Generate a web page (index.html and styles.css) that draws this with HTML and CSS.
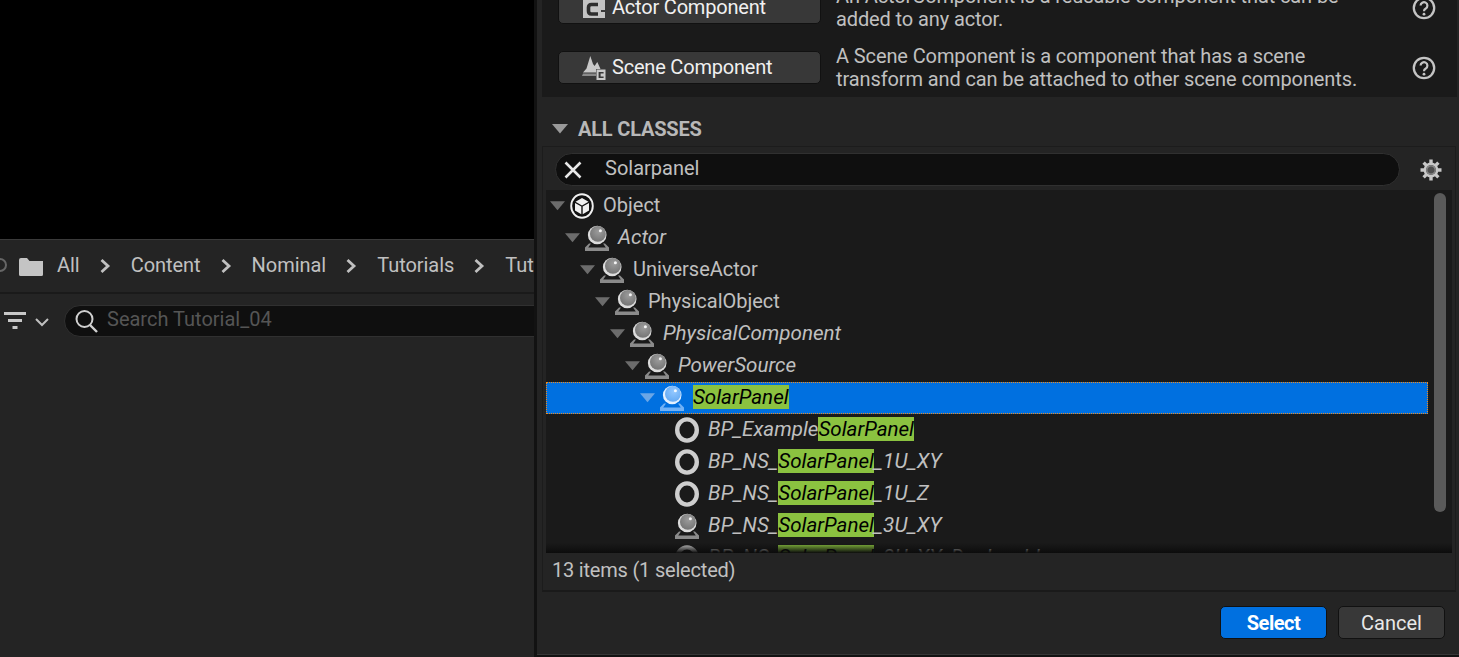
FILE: index.html
```html
<!DOCTYPE html>
<html lang="en">
<head>
<meta charset="utf-8">
<title>Pick Parent Class</title>
<link rel="stylesheet" href="styles.css">
</head>
<body>
<svg class="defs" width="0" height="0" aria-hidden="true">
  <defs>
    <radialGradient id="ball" cx="0.55" cy="0.35" r="0.7">
      <stop offset="0" stop-color="#9c9c9c"/><stop offset="1" stop-color="#727272"/>
    </radialGradient>
    <radialGradient id="ballsel" cx="0.55" cy="0.35" r="0.7">
      <stop offset="0" stop-color="#93c8ff"/><stop offset="1" stop-color="#62a8f2"/>
    </radialGradient>
    <symbol id="actor" viewBox="0 0 24 26" preserveAspectRatio="none">
      <path d="M0 26 V22.6 L4 18.5 H6 L3.2 22.6 H20.8 L18 18.5 H20 L24 22.6 V26 Z" fill="#8b8b8b"/>
      <circle cx="12.2" cy="10" r="9.3" fill="#dcdcdc"/>
      <circle cx="12.9" cy="8.9" r="7.9" fill="url(#ball)"/>
      <circle cx="15.4" cy="5.8" r="1.5" fill="#f4f4f4"/>
    </symbol>
    <symbol id="actorsel" viewBox="0 0 24 26" preserveAspectRatio="none">
      <path d="M0 26 V22.6 L4 18.5 H6 L3.2 22.6 H20.8 L18 18.5 H20 L24 22.6 V26 Z" fill="#72b2f6"/>
      <circle cx="12.2" cy="10" r="9.3" fill="#e4f1ff"/>
      <circle cx="12.9" cy="8.9" r="7.9" fill="url(#ballsel)"/>
      <circle cx="15.4" cy="5.8" r="1.5" fill="#f4faff"/>
    </symbol>
    <symbol id="ring" viewBox="0 0 24 26" preserveAspectRatio="none">
      <ellipse cx="12" cy="13" rx="9.8" ry="10.6" fill="none" stroke="#cecece" stroke-width="4.4"/>
    </symbol>
    <symbol id="tri" viewBox="0 0 16 10">
      <path d="M0 0 H16 L8 9.5 Z" fill="currentColor"/>
    </symbol>
    <symbol id="chev" viewBox="0 0 12 16">
      <path d="M2.5 2 L9 8 L2.5 14" fill="none" stroke="#c0c0c0" stroke-width="2.8"/>
    </symbol>
    <symbol id="help" viewBox="0 0 24 24">
      <circle cx="12" cy="12" r="10.2" fill="none" stroke="#c4c4c4" stroke-width="2.3"/>
      <path d="M8.6 9.6 A3.4 3.4 0 1 1 13.8 12.5 C12.5 13.2 12 13.8 12 15.2" fill="none" stroke="#c4c4c4" stroke-width="2.2"/>
      <circle cx="12" cy="18.2" r="1.4" fill="#c4c4c4"/>
    </symbol>
  </defs>
</svg>

<div class="app">
  <section class="left">
    <div class="viewport"></div>
    <div class="crumbs">
      <span class="history"></span>
      <svg class="folder" width="24" height="18" viewBox="0 0 24 18"><path d="M0 2 Q0 0 2 0 H8 L10.5 3 H24 V16.5 Q24 18 22.5 18 H1.5 Q0 18 0 16.5 Z" fill="#c4c4c4"/></svg>
      <span class="crumb crumb-first">All</span>
      <svg class="chev"><use href="#chev"/></svg>
      <span class="crumb">Content</span>
      <svg class="chev"><use href="#chev"/></svg>
      <span class="crumb">Nominal</span>
      <svg class="chev"><use href="#chev"/></svg>
      <span class="crumb">Tutorials</span>
      <svg class="chev"><use href="#chev"/></svg>
      <span class="crumb">Tutorial_04</span>
    </div>
    <div class="filterbar">
      <svg class="filter-icon" width="22" height="18" viewBox="0 0 22 18"><path d="M0 1.5 H22 M4 8.5 H18 M8.5 15.5 H13.5" stroke="#c8c8c8" stroke-width="3" fill="none"/></svg>
      <svg class="filter-caret" width="14" height="9" viewBox="0 0 14 9"><path d="M1 1 L7 7 L13 1" fill="none" stroke="#c0c0c0" stroke-width="2"/></svg>
      <div class="searchbox">
        <svg width="24" height="26" viewBox="0 0 24 26"><circle cx="10.5" cy="11" r="8" fill="none" stroke="#d0d0d0" stroke-width="2"/><path d="M16 17 L23 24" stroke="#d0d0d0" stroke-width="2.4"/></svg>
        <span class="placeholder">Search Tutorial_04</span>
      </div>
    </div>
  </section>

  <section class="dialog">
    <div class="common">
      <div class="common-row">
        <button class="comp-btn">
          <svg class="comp-icon" width="24" height="24" viewBox="0 0 24 24"><path d="M1 1 H23 V22 H1 Z" fill="#c4c4c4"/><path d="M16 8.5 H9.5 Q6.5 8.5 6.5 11.5 V15 Q6.5 18 9.5 18 H16" fill="none" stroke="#2e2e2e" stroke-width="3.6"/><path d="M19 14 H23 V16 H19 Z" fill="#3a3a3a"/></svg>
          Actor Component
        </button>
        <p class="comp-desc">An ActorComponent is a reusable component that can be<br>added to any actor.</p>
        <svg class="help"><use href="#help"/></svg>
      </div>
      <div class="common-row">
        <button class="comp-btn">
          <svg class="comp-icon" width="24" height="24" viewBox="0 0 24 24"><path d="M1 16.5 L4.5 12.5 L8.3 0 L11 8 L12.6 10 L15.3 6 L18.5 13 H14 V16.5 Z" fill="#c8c8c8"/><path d="M1 17.4 H14 V20 H0 Z" fill="#8a8a8a"/><path d="M14.5 13.5 H23.5 V24 H14.5 Z M16.6 16 V22 H21.6 V20.4 H18.6 V17.6 H21.6 V16 Z" fill="#cacaca" fill-rule="evenodd"/></svg>
          Scene Component
        </button>
        <p class="comp-desc">A Scene Component is a component that has a scene<br>transform and can be attached to other scene components.</p>
        <svg class="help"><use href="#help"/></svg>
      </div>
    </div>

    <h2 class="section-title"><svg class="section-tri"><use href="#tri"/></svg>ALL CLASSES</h2>

    <div class="picker">
      <div class="search-row">
        <div class="classsearch">
          <svg class="clear" width="18" height="18" viewBox="0 0 18 18"><path d="M1.5 1.5 L16.5 16.5 M16.5 1.5 L1.5 16.5" stroke="#e8e8e8" stroke-width="2.6"/></svg>
          <span class="query">Solarpanel</span>
        </div>
        <svg class="gear" width="22" height="22" viewBox="0 0 22 22">
          <g stroke="#c8c8c8" stroke-width="3.4">
            <path d="M11 0.5 V21.5 M0.5 11 H21.5 M3.6 3.6 L18.4 18.4 M18.4 3.6 L3.6 18.4"/>
          </g>
          <circle cx="11" cy="11" r="7.4" fill="#c8c8c8"/>
          <circle cx="11" cy="11" r="5" fill="#4e4e4e"/>
          <circle cx="11" cy="11" r="4.2" fill="none" stroke="#8a8a8a" stroke-width="1.2"/>
        </svg>
      </div>

      <div class="tree">
        <div class="rows">
          <div class="row lvl0">
            <svg class="tri"><use href="#tri"/></svg>
            <svg class="ico obj" viewBox="0 0 24 26" preserveAspectRatio="none"><ellipse cx="12" cy="13" rx="10.8" ry="11.8" fill="#111" stroke="#f0f0f0" stroke-width="1.9"/><path d="M12 5 L18.5 8.8 L12 12.4 L5.5 8.8 Z M5 10 L11.3 13.6 V21.2 L5 17.4 Z M19 10 L12.7 13.6 V21.2 L19 17.4 Z" fill="#f0f0f0"/></svg>
            <span class="label">Object</span>
          </div>
          <div class="row lvl1">
            <svg class="tri"><use href="#tri"/></svg>
            <svg class="ico"><use href="#actor"/></svg>
            <span class="label abstract">Actor</span>
          </div>
          <div class="row lvl2">
            <svg class="tri"><use href="#tri"/></svg>
            <svg class="ico"><use href="#actor"/></svg>
            <span class="label">UniverseActor</span>
          </div>
          <div class="row lvl3">
            <svg class="tri"><use href="#tri"/></svg>
            <svg class="ico"><use href="#actor"/></svg>
            <span class="label">PhysicalObject</span>
          </div>
          <div class="row lvl4">
            <svg class="tri"><use href="#tri"/></svg>
            <svg class="ico"><use href="#actor"/></svg>
            <span class="label abstract">PhysicalComponent</span>
          </div>
          <div class="row lvl5">
            <svg class="tri"><use href="#tri"/></svg>
            <svg class="ico"><use href="#actor"/></svg>
            <span class="label abstract">PowerSource</span>
          </div>
          <div class="row lvl6 selected">
            <svg class="tri"><use href="#tri"/></svg>
            <svg class="ico"><use href="#actorsel"/></svg>
            <span class="label abstract"><mark>SolarPanel</mark></span>
          </div>
          <div class="row lvl7">
            <svg class="ico"><use href="#ring"/></svg>
            <span class="label abstract">BP_Example<mark>SolarPanel</mark></span>
          </div>
          <div class="row lvl7">
            <svg class="ico"><use href="#ring"/></svg>
            <span class="label abstract wide">BP_NS_<mark>SolarPanel</mark>_1U_XY</span>
          </div>
          <div class="row lvl7">
            <svg class="ico"><use href="#ring"/></svg>
            <span class="label abstract wide">BP_NS_<mark>SolarPanel</mark>_1U_Z</span>
          </div>
          <div class="row lvl7">
            <svg class="ico"><use href="#actor"/></svg>
            <span class="label abstract wide">BP_NS_<mark>SolarPanel</mark>_3U_XY</span>
          </div>
          <div class="row lvl7">
            <svg class="ico"><use href="#ring"/></svg>
            <span class="label abstract wide">BP_NS_<mark>SolarPanel</mark>_3U_XY_Deployable</span>
          </div>
        </div>
        <div class="scroll-track"><div class="scroll-thumb"></div></div>
      </div>
      <div class="status">13 items (1 selected)</div>
    </div>

    <div class="footer">
      <button class="btn primary">Select</button>
      <button class="btn">Cancel</button>
    </div>
  </section>
</div>
</body>
</html>
```
FILE: styles.css
```css
* { box-sizing: border-box; }
html, body { margin: 0; height: 657px; overflow: hidden; background: #242424; }
body { font-family: Roboto, "Liberation Sans", sans-serif; font-size: 20px; color: #c0c0c0; }
.defs { display: block; height: 0; }
.app { display: flex; height: 657px; overflow: hidden; }

/* left: content browser */
.left { width: 534px; flex: none; display: flex; flex-direction: column; overflow: hidden; }
.viewport { height: 239px; background: #000; flex: none; }
.crumbs { flex: none; height: 55px; border-top: 1px solid #3a3a3a; border-bottom: 2px solid #1a1a1a; display: flex; align-items: center; white-space: nowrap; overflow: hidden; padding-bottom: 2px; }
.history { flex: none; width: 14px; height: 14px; border: 2px solid #666; border-radius: 50%; margin-left: -7px; margin-right: 12px; }
.folder { flex: none; margin-top: 3px; }
.crumb { color: #c0c0c0; letter-spacing: -0.04px; }
.crumb-first { margin-left: 14px; }
.chev { flex: none; width: 12px; height: 16px; margin: 2px 20px 0 19px; }
.filterbar { flex: none; display: flex; align-items: center; height: 54px; padding-left: 4px; }
.filter-icon { flex: none; }
.filter-caret { flex: none; margin-left: 9px; margin-top: 2px; }
.searchbox { flex: none; width: 560px; height: 32px; margin-left: 15px; background: #0f0f0f; border: 1px solid #303030; border-radius: 16px; display: flex; align-items: center; padding-left: 9px; gap: 9px; }
.placeholder { color: #555; margin-bottom: 4px; }

/* dialog */
.dialog { flex: 1; min-width: 0; border-left: 3px solid #121212; border-bottom: 2px solid #121212; box-shadow: inset 0 -1px #363636; display: flex; flex-direction: column; height: 657px; }
.common { flex: none; height: 97px; margin-left: 5px; margin-right: 2px; background: #1a1a1a; display: flex; flex-direction: column; justify-content: flex-end; gap: 27px; padding: 0 0 13px 16px; overflow: hidden; }
.common-row { flex: none; display: flex; align-items: center; height: 33px; }
.comp-btn { flex: none; width: 263px; height: 33px; padding: 0 0 2px 23px; display: flex; align-items: center; gap: 6px; background: #383838; border: 1px solid #111; border-radius: 5px; color: #f0f0f0; font: inherit; letter-spacing: -0.2px; }
.comp-icon { flex: none; margin-top: 2px; }
.comp-desc { margin: 0 0 0 15px; width: 560px; line-height: 23px; color: #c0c0c0; white-space: nowrap; letter-spacing: -0.11px; }
.help { flex: none; width: 24px; height: 24px; margin-left: 16px; }

.section-title { flex: none; margin: 0; height: 49px; font-size: 20px; font-weight: 700; color: #b8b8b8; display: flex; align-items: center; padding: 14px 0 0 15px; letter-spacing: -0.2px; }
.section-tri { width: 16px; height: 10px; color: #9a9a9a; margin-right: 10px; }

.picker { flex: none; height: 446px; margin-left: 5px; margin-right: 3px; border: 1px solid #1c1c1c; border-bottom: 2px solid #1a1a1a; display: flex; flex-direction: column; }
.search-row { flex: none; height: 43px; display: flex; align-items: flex-start; padding: 6px 0 0 12px; }
.classsearch { flex: none; width: 845px; height: 33px; background: #0f0f0f; border: 1px solid #303030; border-radius: 17px; display: flex; align-items: center; padding-left: 8px; }
.query { margin-left: 23px; margin-bottom: 4px; color: #c0c0c0; }
.clear { flex: none; }
.gear { flex: none; margin: 6px 0 0 20px; }

.tree { flex: none; height: 363px; margin-left: 3px; margin-right: 3px; background: #1a1a1a; display: flex; overflow: hidden; position: relative; }
.tree::after { content: ""; position: absolute; left: 0; right: 0; bottom: 0; height: 10px; background: linear-gradient(to bottom, rgba(10,10,10,0), #0c0c0c); }
.rows { flex: none; width: 882px; overflow: hidden; height: 363px; }
.row { height: 32px; display: flex; align-items: center; white-space: nowrap; }
.row.selected { background: #0070e0; outline: 1px dotted #f08a1c; outline-offset: -1px; }
.tri { flex: none; width: 15px; height: 10px; color: #6c6c6c; margin-right: 5px; }
.selected .tri { color: #6aa6e6; }
.ico { flex: none; width: 24px; height: 26px; }
.label { margin-left: 9px; margin-bottom: 2px; color: #c0c0c0; }
.abstract { font-style: italic; font-size: 20.6px; }
.wide { letter-spacing: 0.18px; }
.selected .label { color: #000; }
mark { background: #8bc240; color: #000; letter-spacing: 0; }
.lvl0 { padding-left: 4px; }
.lvl1 { padding-left: 19px; }
.lvl2 { padding-left: 34px; }
.lvl3 { padding-left: 49px; }
.lvl4 { padding-left: 64px; }
.lvl5 { padding-left: 79px; }
.lvl6 { padding-left: 94px; }
.lvl7 { padding-left: 129px; }
.scroll-track { flex: none; width: 12px; margin-left: 6px; padding-top: 3px; }
.scroll-thumb { width: 12px; height: 319px; border-radius: 6px; background: #5a5a5a; }
.status { flex: 1; display: flex; align-items: center; padding: 0 0 3px 9px; letter-spacing: -0.2px; }

.footer { flex: 1; display: flex; justify-content: flex-end; align-items: center; gap: 11px; padding: 0 14px 2px 0; }
.btn { width: 107px; height: 33px; border-radius: 5px; border: 1px solid #111; background: #383838; color: #e8e8e8; font: inherit; padding: 0; }
.btn.primary { background: #0070e0; color: #fff; font-weight: 700; letter-spacing: -0.5px; }
```
